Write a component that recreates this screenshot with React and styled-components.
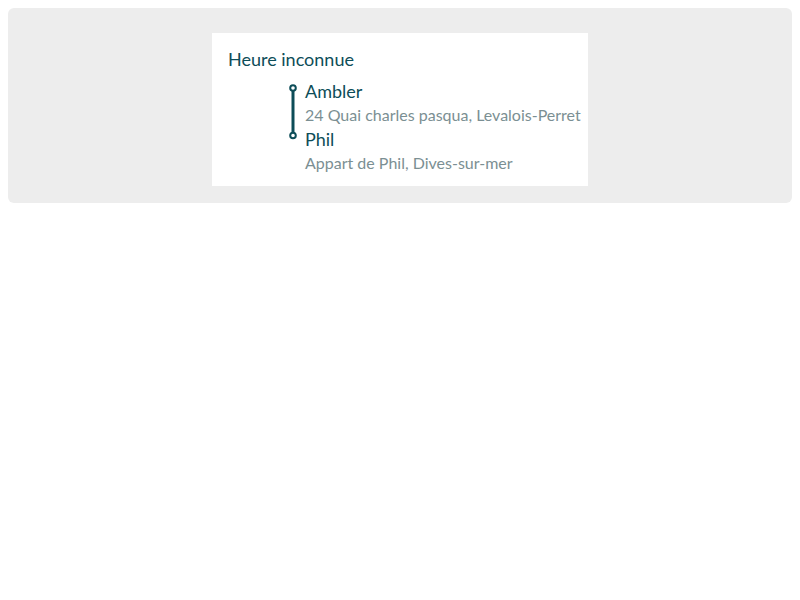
import React from "react";
import styled, { createGlobalStyle } from "styled-components";

const Global = createGlobalStyle`
  body { margin: 8px; background: #fff; font-family: Lato, "Noto Sans", sans-serif; }
`;

const Panel = styled.div`
  background: #ededed;
  border-radius: 6px;
  padding: 25px 0 17px;
  display: flex;
  justify-content: center;
`;

const Card = styled.div`
  width: 376px;
  background: #fff;
  padding: 14px 16px 11px;
  box-sizing: border-box;
`;

const Title = styled.div`
  color: #0d4d58;
  font-size: 18px;
  line-height: 24px;
`;

const Timeline = styled.div`
  display: flex;
  margin-top: 8px;
  padding-left: 60px;
`;

const Track = styled.svg`
  width: 10px;
  height: 62px;
  flex: none;
  margin-right: 7px;
`;

const Stops = styled.div`
  display: flex;
  flex-direction: column;
  white-space: nowrap;
`;

const Name = styled.div`
  color: #0d4d58;
  font-size: 18px;
  line-height: 24px;
`;

const Address = styled.div`
  color: #7b8f93;
  font-size: 16px;
  line-height: 24px;
`;

const stops = [
  { name: "Ambler", address: "24 Quai charles pasqua, Levalois-Perret" },
  { name: "Phil", address: "Appart de Phil, Dives-sur-mer" },
];

export default function App() {
  return (
    <>
      <Global />
      <Panel>
        <Card>
          <Title>Heure inconnue</Title>
          <Timeline>
            <Track viewBox="0 0 10 62">
              <line x1="5" y1="12" x2="5" y2="56" stroke="#0d4d58" strokeWidth="3" />
              <circle cx="5" cy="9" r="2.8" fill="#fff" stroke="#0d4d58" strokeWidth="2" />
              <circle cx="5" cy="56.5" r="2.8" fill="#fff" stroke="#0d4d58" strokeWidth="2" />
            </Track>
            <Stops>
              {stops.map((s) => (
                <React.Fragment key={s.name}>
                  <Name>{s.name}</Name>
                  <Address>{s.address}</Address>
                </React.Fragment>
              ))}
            </Stops>
          </Timeline>
        </Card>
      </Panel>
    </>
  );
}
